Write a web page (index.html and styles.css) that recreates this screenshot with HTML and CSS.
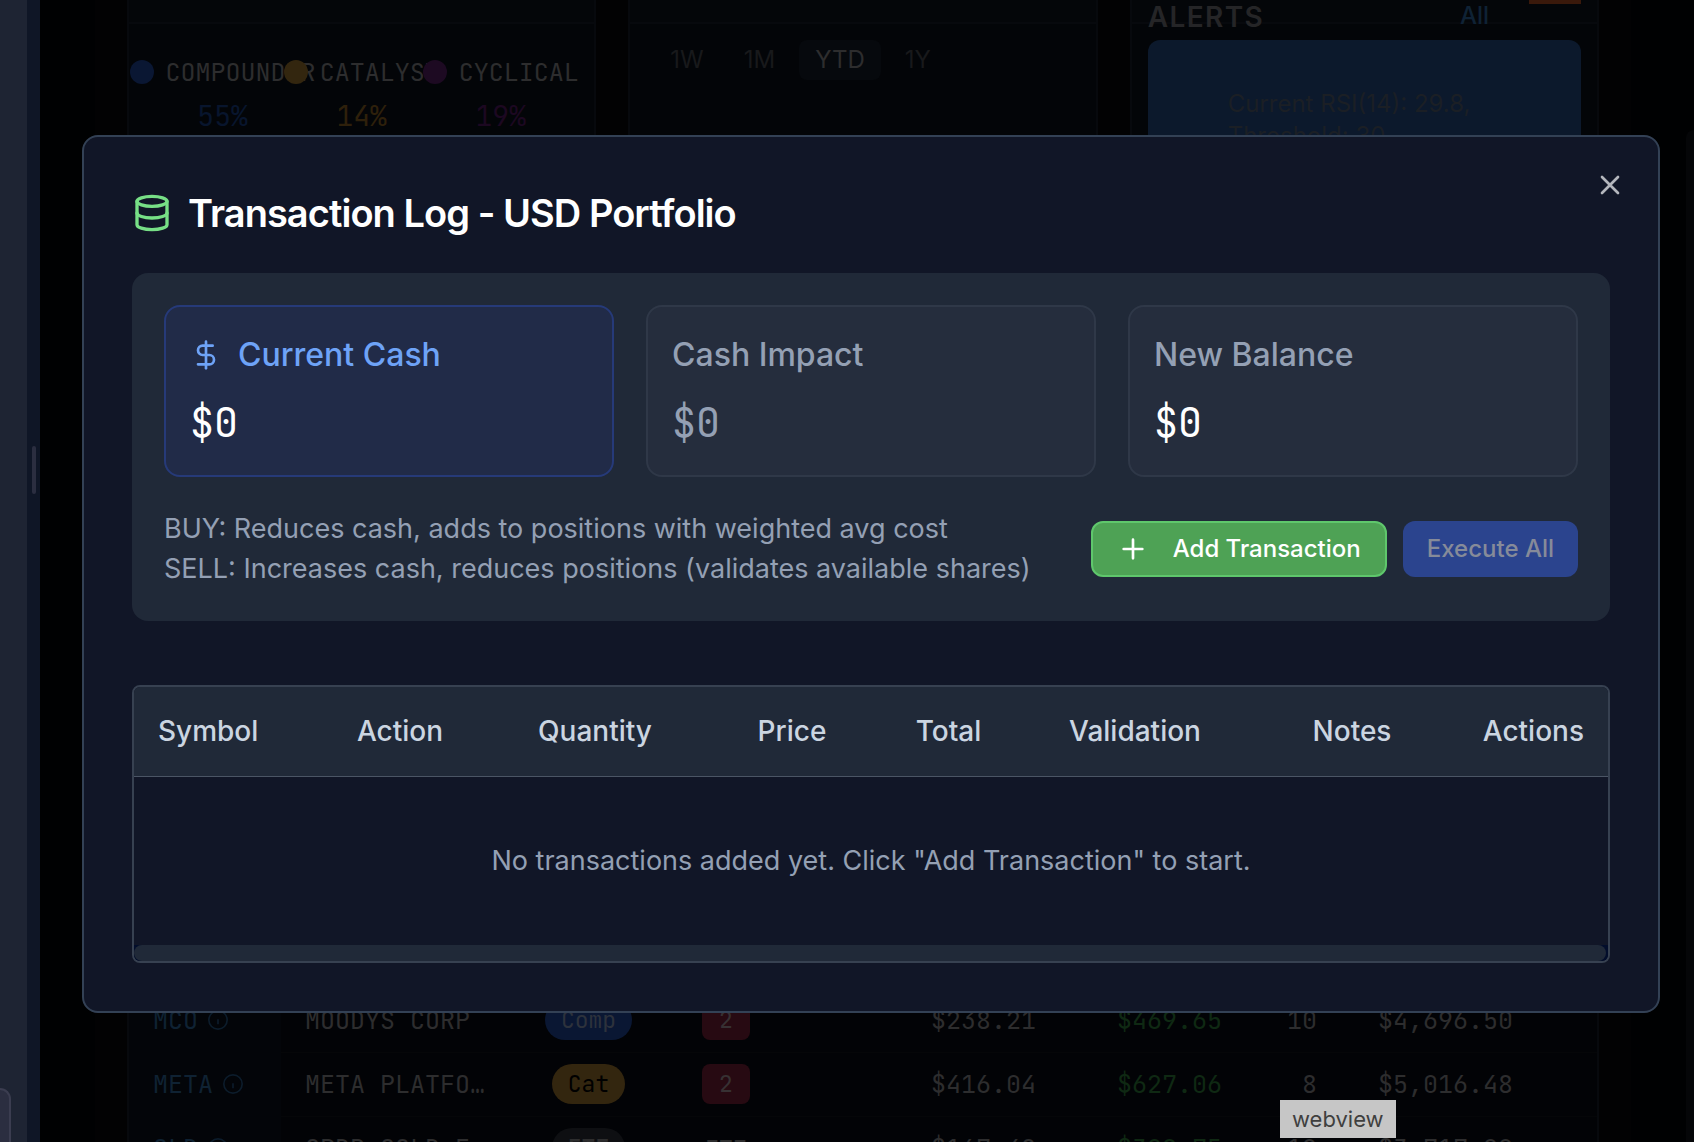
FILE: index.html
```html
<!DOCTYPE html>
<html lang="en">
<head>
<meta charset="utf-8">
<title>Transaction Log - USD Portfolio</title>
<link rel="stylesheet" href="styles.css">
</head>
<body>
<svg class="sprite" aria-hidden="true">
  <symbol id="info" viewBox="0 0 24 24"><circle cx="12" cy="12" r="11"/><path d="M12 17v-6M12 7h.01"/></symbol>
</svg>
<div class="app">
  <aside class="sidebar">
    <div class="sidebar-chip"></div>
  </aside>
  <div class="splitter"><span class="splitter-grip"></span></div>
  <main class="page">
    <div class="column">
      <div class="widgets">
        <section class="widget">
          <div class="widget-head"></div>
          <div class="legend">
            <div class="legend-item blue">
              <div class="legend-label"><span class="dot"></span>COMPOUNDER</div>
              <div class="legend-value">55%</div>
            </div>
            <div class="legend-item amber">
              <div class="legend-label"><span class="dot"></span>CATALYST</div>
              <div class="legend-value">14%</div>
            </div>
            <div class="legend-item purple">
              <div class="legend-label"><span class="dot"></span>CYCLICAL</div>
              <div class="legend-value">19%</div>
            </div>
          </div>
        </section>
        <section class="widget">
          <div class="widget-head"></div>
          <div class="ranges">
            <button type="button" class="range">1W</button>
            <button type="button" class="range">1M</button>
            <button type="button" class="range selected">YTD</button>
            <button type="button" class="range">1Y</button>
          </div>
        </section>
        <section class="widget widget-alerts">
          <div class="widget-head"></div>
          <div class="alerts">
            <header class="alerts-head">
              <h3 class="alerts-title">ALERTS</h3>
              <a class="alerts-all" href="#">All</a>
              <span class="alerts-count"></span>
            </header>
            <p class="alert">Current RSI(14): 29.8,<br>Threshold: 30</p>
          </div>
        </section>
      </div>
      <div class="holdings-wrap">
        <table class="holdings">
          <colgroup>
            <col class="h-symbol"><col class="h-name"><col class="h-type"><col class="h-rank"><col class="h-cost"><col class="h-price"><col class="h-qty"><col class="h-value"><col class="h-more">
          </colgroup>
          <tbody>
            <tr>
              <td class="sym"><span class="sym-in">MCO<svg class="info"><use href="#info"/></svg></span></td>
              <td>MOODYS CORP</td>
              <td class="mid"><span class="pill comp">Comp</span></td>
              <td class="mid"><span class="rank">2</span></td>
              <td class="num">$238.21</td>
              <td class="num up">$469.65</td>
              <td class="num">10</td>
              <td class="num">$4,696.50</td>
              <td></td>
            </tr>
            <tr>
              <td class="sym"><span class="sym-in">META<svg class="info"><use href="#info"/></svg></span></td>
              <td>META PLATFO…</td>
              <td class="mid"><span class="pill cat">Cat</span></td>
              <td class="mid"><span class="rank">2</span></td>
              <td class="num">$416.04</td>
              <td class="num up">$627.06</td>
              <td class="num">8</td>
              <td class="num">$5,016.48</td>
              <td></td>
            </tr>
            <tr>
              <td class="sym"><span class="sym-in">GLD<svg class="info"><use href="#info"/></svg></span></td>
              <td>SPDR GOLD E…</td>
              <td class="mid"><span class="pill etf">ETF</span></td>
              <td class="mid"><span class="rank-text">ETF</span></td>
              <td class="num">$167.48</td>
              <td class="num up">$309.75</td>
              <td class="num">12</td>
              <td class="num">$3,717.00</td>
              <td></td>
            </tr>
          </tbody>
        </table>
      </div>
    </div>
    <div class="edge-card"></div>
  </main>
</div>

<div class="overlay">
  <div class="dialog" role="dialog" aria-labelledby="dialog-title">
    <button type="button" class="close" aria-label="Close">
      <svg class="icon" viewBox="0 0 24 24"><path d="M18 6 6 18M6 6l12 12"/></svg>
    </button>
    <h2 class="title" id="dialog-title">
      <svg class="icon title-icon" viewBox="0 0 24 24"><ellipse cx="12" cy="5" rx="9" ry="3"/><path d="M3 5v14a9 3 0 0 0 18 0V5"/><path d="M3 12a9 3 0 0 0 18 0"/></svg>
      Transaction Log - USD Portfolio
    </h2>
    <section class="summary">
      <div class="cards">
        <div class="card current">
          <div class="card-label"><svg class="icon" viewBox="0 0 24 24"><path d="M12 2v20"/><path d="M17 5H9.5a3.5 3.5 0 0 0 0 7h5a3.5 3.5 0 0 1 0 7H6"/></svg>Current Cash</div>
          <div class="card-value">$0</div>
        </div>
        <div class="card">
          <div class="card-label">Cash Impact</div>
          <div class="card-value muted">$0</div>
        </div>
        <div class="card">
          <div class="card-label">New Balance</div>
          <div class="card-value">$0</div>
        </div>
      </div>
      <div class="actions">
        <p class="hint">BUY: Reduces cash, adds to positions with weighted avg cost<br>SELL: Increases cash, reduces positions (validates available shares)</p>
        <div class="buttons">
          <button type="button" class="btn btn-add"><svg class="icon" viewBox="0 0 24 24"><path d="M5 12h14M12 5v14"/></svg>Add Transaction</button>
          <button type="button" class="btn btn-run" disabled>Execute All</button>
        </div>
      </div>
    </section>
    <div class="log">
      <table class="log-table">
        <colgroup>
          <col class="c-symbol"><col class="c-action"><col class="c-quantity"><col class="c-price"><col class="c-total"><col class="c-validation"><col class="c-notes"><col class="c-actions">
        </colgroup>
        <thead>
          <tr><th class="first">Symbol</th><th>Action</th><th>Quantity</th><th>Price</th><th>Total</th><th>Validation</th><th>Notes</th><th class="last">Actions</th></tr>
        </thead>
        <tbody>
          <tr><td colspan="8">No transactions added yet. Click "Add Transaction" to start.</td></tr>
        </tbody>
      </table>
      <div class="scroll-track"><div class="scroll-thumb"></div></div>
    </div>
  </div>
</div>
<div class="tooltip" role="tooltip">webview</div>
</body>
</html>
```
FILE: styles.css
```css
* { box-sizing: border-box; }

body {
  margin: 0;
  height: 100vh;
  overflow: hidden;
  background: #000102;
  color: #2d2d2e;
  font: 400 24px/32px Inter, "Liberation Sans", sans-serif;
}

button { font: inherit; border: 0; padding: 0; background: none; color: inherit; }
h2, h3, p { margin: 0; }
.sprite { display: none; }

.icon {
  width: 32px;
  height: 32px;
  flex: none;
  fill: none;
  stroke: currentColor;
  stroke-width: 2;
  stroke-linecap: round;
  stroke-linejoin: round;
}

/* Page behind the dialog */
.app { display: flex; height: 100vh; }

.sidebar {
  width: 27px;
  background: #1e2433;
  display: flex;
  align-items: flex-end;
}
.sidebar-chip {
  width: 11px;
  height: 54px;
  border: 2px solid #3b3d50;
  border-width: 2px 2px 0 0;
  border-radius: 0 12px 0 0;
  background: #2b2e40;
}

.splitter {
  width: 13px;
  background: #0f1626;
  display: flex;
  justify-content: center;
  padding-top: 446px;
}
.splitter-grip {
  width: 4px;
  height: 48px;
  border-radius: 2px;
  background: #2b2e40;
}

.page { flex: 1; display: flex; min-width: 0; padding-left: 55px; }

.column {
  flex: 1;
  min-width: 0;
  padding: 0 32px;
  background: #020203;
  display: flex;
  flex-direction: column;
  justify-content: space-between;
}
.edge-card {
  width: 8px;
  margin: 130px 0 0 55px;
  border-radius: 12px 0 0 0;
  background: #050608;
}

.widgets {
  display: grid;
  grid-template-columns: repeat(3, 1fr);
  gap: 32px;
  height: 200px;
}
.widget {
  min-width: 0;
  border: 2px solid #07090d;
  border-width: 0 2px;
  background: #030508;
}
.widget-head { height: 24px; border-bottom: 2px solid #07090d; background: #040609; }

.legend { display: grid; grid-template-columns: repeat(3, minmax(0, 1fr)); padding: 28px 24px; font-family: "JetBrains Mono", "DejaVu Sans Mono", monospace; }
.legend-item { display: flex; flex-direction: column; align-items: center; gap: 4px; }
.legend-label { display: flex; align-items: center; gap: 12px; font-size: 25px; line-height: 40px; }
.legend-value { font-size: 28px; line-height: 40px; }
.dot { width: 24px; height: 24px; border-radius: 50%; flex: none; }
.blue .dot { background: #0a1733; }
.blue .legend-value { color: #08152d; }
.amber .dot { background: #33260f; }
.amber .legend-value { color: #2e200b; }
.purple .dot { background: #1d0a22; }
.purple .legend-value { color: #1c0821; }

.ranges { display: flex; gap: 8px; padding: 16px 24px; }
.range { padding: 0 16px; line-height: 40px; border-radius: 8px; color: #18191b; }
.range.selected { background: #06090d; color: #2d2d2e; }

.widget-alerts { display: grid; }
.widget-alerts > * { grid-area: 1 / 1; }
.alerts { padding: 0 16px; }
.alerts-head { display: flex; align-items: flex-start; height: 40px; }
.alerts-title { flex: 1; font-size: 28px; font-weight: 600; letter-spacing: 0.05em; line-height: 34px; color: #252527; }
.alerts-all { font-weight: 500; color: #0f2235; text-decoration: none; }
.alerts-count { width: 52px; height: 4px; margin-left: 40px; background: #3a190b; }
.alert { padding: 48px 80px 16px; height: 160px; border-radius: 12px; background: #0c192c; color: #1b1f25; }

.holdings-wrap { height: 154px; overflow: hidden; border: 2px solid #07090d; border-width: 0 2px; background: #020306; }
.holdings { width: 100%; table-layout: fixed; border-collapse: collapse; font-family: "JetBrains Mono", "DejaVu Sans Mono", monospace; font-size: 25px; }
.holdings td { height: 64px; padding: 0 24px; border-bottom: 1px solid #050608; white-space: nowrap; }
.holdings .sym { background: #030509; color: #0f2233; border-color: #030509; }
.holdings .mid { padding: 0; text-align: center; }
.holdings .num { padding-left: 0; text-align: right; }
.holdings .up { color: #0f2913; }
.sym-in { display: flex; align-items: center; gap: 10px; }
.info { width: 20px; height: 20px; fill: none; stroke: #0c1c2b; stroke-width: 2; }
.pill, .rank { display: inline-block; line-height: 40px; font-size: 23px; }
.pill { padding: 0 16px; border-radius: 20px; }
.rank { width: 48px; border-radius: 8px; background: #270a12; color: #373133; }
.rank-text { font-size: 23px; font-weight: 700; }
.comp { background: #0a1733; color: #2d323c; }
.cat { background: #33260f; color: #000; }
.etf { background: #0e0f12; font-weight: 700; }
.h-symbol { width: 152px; }
.h-name { width: 248px; }
.h-type { width: 119px; }
.h-rank { width: 156px; }
.h-cost { width: 256px; }
.h-price { width: 186px; }
.h-qty { width: 95px; }
.h-value { width: 196px; }
.h-more { width: 60px; }

/* Dialog */
.overlay {
  position: fixed;
  inset: 0;
  padding: 135px 34px 0 82px;
}
.dialog {
  position: relative;
  padding: 48px;
  border: 2px solid #334155;
  border-radius: 16px;
  background: #111627;
  font-size: 27px;
  line-height: 40px;
}
.close { position: absolute; top: 32px; right: 32px; display: flex; color: #b4b6bd; }

.title {
  display: flex;
  align-items: center;
  gap: 16px;
  margin-bottom: 32px;
  color: #fff;
  font-size: 38px;
  font-weight: 600;
  line-height: 56px;
  letter-spacing: -0.025em;
}
.title-icon { width: 40px; height: 40px; color: #77df86; }

.summary { padding: 32px; border-radius: 16px; background: #202938; }
.cards { display: grid; grid-template-columns: repeat(3, 1fr); gap: 32px; }
.card { padding: 24px; border: 2px solid #2f3848; border-radius: 16px; background: #252d3d; }
.card-label {
  display: flex;
  align-items: center;
  gap: 16px;
  margin-bottom: 16px;
  color: #94a0b4;
  font-size: 32px;
  font-weight: 500;
  line-height: 48px;
}
.card-value { color: #fff; font: 400 40px/56px "JetBrains Mono", "DejaVu Sans Mono", monospace; }
.card-value.muted { color: #94a0b4; }
.card.current { border-color: #263a79; background: #212b48; }
.current .card-label { color: #6ea3f7; }

.actions { display: flex; align-items: center; justify-content: space-between; margin-top: 32px; color: #94a0b4; }
.buttons { display: flex; gap: 16px; }
.btn {
  display: flex;
  align-items: center;
  gap: 24px;
  height: 56px;
  padding: 0 24px;
  border-radius: 12px;
  font-size: 24px;
  font-weight: 500;
  line-height: 32px;
}
.btn-add { border: 2px solid #5fc76c; background: #4ea255; color: #fff; }
.btn-run { background: #2b448e; color: #868b99; }

.log { margin-top: 64px; border: 2px solid #374151; border-radius: 8px; overflow: hidden; }
.log-table { width: 100%; table-layout: fixed; border-collapse: collapse; }
.log-table th { height: 89px; padding: 0; border-bottom: 1px solid #4b5565; background: #202938; color: #cbd5e1; font-size: 28px; font-weight: 500; text-align: center; }
.log-table .first { padding-left: 24px; text-align: left; }
.log-table .last { padding-right: 24px; text-align: right; }
.log-table td { padding: 64px 24px; color: #94a0b4; text-align: center; }
.scroll-track { padding-right: 2px; background: #020d2b; }
.scroll-thumb { height: 16px; border-radius: 8px; background: #202938; }
.c-symbol { width: 184px; }
.c-action { width: 164px; }
.c-quantity { width: 226px; }
.c-price { width: 168px; }
.c-total { width: 145px; }
.c-validation { width: 228px; }
.c-notes { width: 206px; }
.c-actions { width: 153px; }

.tooltip {
  position: fixed;
  left: 1280px;
  top: 1100px;
  padding: 3px 12px;
  background: #c6c6c6;
  color: #3f3f3f;
  font-size: 22px;
}
```
